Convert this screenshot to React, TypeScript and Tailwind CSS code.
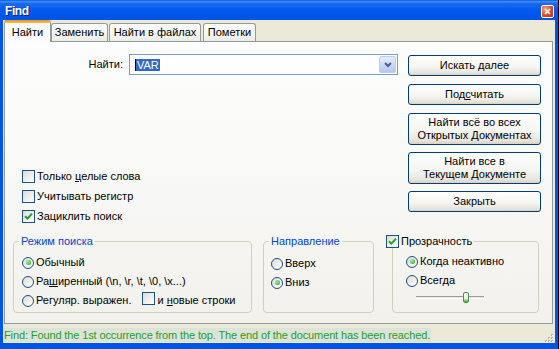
import React from "react";

function CheckBox({ checked = false }: { checked?: boolean }) {
  return (
    <span className="inline-flex w-[13px] h-[13px] shrink-0 items-center justify-center border border-[#1c5180] bg-[linear-gradient(135deg,#dcdcd7,#ffffff)]">
      {checked && (
        <svg width="9" height="9" viewBox="0 0 9 9">
          <path d="M1 4.2 L3.4 6.6 L8 1.6" stroke="#21a121" strokeWidth="2" fill="none" />
        </svg>
      )}
    </span>
  );
}

function Radio({ on = false }: { on?: boolean }) {
  return (
    <span className="inline-flex w-[12px] h-[12px] shrink-0 items-center justify-center rounded-full border border-[#1c5180] bg-[linear-gradient(135deg,#dcdcd7,#ffffff)]">
      {on && (
        <span className="w-[5px] h-[5px] rounded-full bg-[radial-gradient(circle_at_35%_35%,#a6f0a0,#21a121)]" />
      )}
    </span>
  );
}

function Btn({ children, tall = false }: { children: React.ReactNode; tall?: boolean }) {
  return (
    <div
      className={
        (tall ? "h-[32px] " : "h-[21px] ") +
        "w-[133px] rounded-[3px] border border-[#003c74] bg-[linear-gradient(#ffffff,#f4f4f0_60%,#e6e3da_90%,#d6d0c5)] flex flex-col items-center justify-center text-center leading-[13px] whitespace-nowrap"
      }
    >
      {children}
    </div>
  );
}

export default function App() {
  return (
    <div className="w-[559px] h-[349px] bg-black flex overflow-hidden [font-family:'Liberation_Sans',Arial,sans-serif] text-[11px] text-black">
      <div className="w-[558px] h-[349px] flex flex-col bg-[#0055e5]">
        {/* Title bar */}
        <div className="h-[20px] shrink-0 flex items-center bg-[linear-gradient(#0a55dc_0%,#3d8cf6_8%,#1a68f0_18%,#0058ee_55%,#0053e4_100%)]">
          <span className="ml-[5px] mt-[1px] text-white font-bold text-[12px] tracking-[-0.4px] [text-shadow:1px_1px_0_#0a1e7a]">
            Find
          </span>
          <div className="ml-auto mr-[4px] mt-[2px] w-[13px] h-[13px] rounded-[2px] border border-white bg-[radial-gradient(circle_at_30%_30%,#f0a58a,#d8451d_60%,#b8300c)] flex items-center justify-center">
            <svg width="7" height="7" viewBox="0 0 7 7">
              <path d="M1 1 L6 6 M6 1 L1 6" stroke="white" strokeWidth="1.6" />
            </svg>
          </div>
        </div>

        {/* Body */}
        <div className="flex-1 mx-[3px] bg-[#ece9d8] flex flex-col">
          {/* Tabs */}
          <div className="h-[21px] shrink-0 flex items-end pl-[1px]">
            <div className="relative z-10 -mb-px w-[47px] h-[22px] rounded-t-[3px] border-x border-[#919b9c] bg-[#fcfcfe] flex flex-col">
              <div className="h-[3px] -mx-px rounded-t-[3px] bg-[linear-gradient(#e68b2c,#ffc73c)]" />
              <div className="flex-1 flex items-center justify-center pb-[1px]">Найти</div>
            </div>
            <div className="w-[57px] h-[18px] rounded-t-[3px] border border-b-0 border-[#919b9c] bg-[linear-gradient(#ffffff,#f3f3ef_70%,#ecebe6)] flex items-center justify-center">
              Заменить
            </div>
            <div className="ml-[1px] w-[92px] h-[18px] rounded-t-[3px] border border-b-0 border-[#919b9c] bg-[linear-gradient(#ffffff,#f3f3ef_70%,#ecebe6)] flex items-center justify-center">
              Найти в файлах
            </div>
            <div className="ml-[2px] w-[53px] h-[18px] rounded-t-[3px] border border-b-0 border-[#919b9c] bg-[linear-gradient(#ffffff,#f3f3ef_70%,#ecebe6)] flex items-center justify-center">
              Пометки
            </div>
          </div>

          {/* Panel */}
          <div className="ml-[1px] w-[549px] h-[283px] shrink-0 border border-[#919b9c] bg-[linear-gradient(#fdfdfd,#f8f8f6_50%,#f2f1ec)] flex flex-col">
            {/* Top section */}
            <div className="h-[183px] shrink-0 pt-[12px] flex">
              <div className="w-[393px] flex flex-col">
                <div className="h-[21px] flex items-center">
                  <span className="w-[118px] text-right">Найти:</span>
                  <div className="ml-[6px] w-[269px] h-[21px] border border-[#7f9db9] bg-white flex items-center">
                    <span className="ml-[5px] h-[12px] leading-[12px] px-[1px] bg-[#316ac5] text-white border-l border-black">
                      VAR
                    </span>
                    <div className="ml-auto mr-[1px] w-[17px] h-[17px] rounded-[2px] border border-[#b9cdf5] bg-[linear-gradient(#e6eefd,#c6d7fa_60%,#b3c8f4)] flex items-center justify-center">
                      <svg width="8" height="6" viewBox="0 0 8 6">
                        <path d="M1 1 L4 4 L7 1" stroke="#4d6185" strokeWidth="2" fill="none" />
                      </svg>
                    </div>
                  </div>
                </div>
                <div className="mt-[91px] pl-[17px] flex flex-col">
                  <div className="h-[20px] flex items-center gap-[2px]">
                    <CheckBox />
                    <span>
                      Только <u>ц</u>елые слова
                    </span>
                  </div>
                  <div className="h-[20px] flex items-center gap-[2px]">
                    <CheckBox />
                    <span>Учитывать регистр</span>
                  </div>
                  <div className="h-[20px] flex items-center gap-[2px]">
                    <CheckBox checked />
                    <span>Зациклить поиск</span>
                  </div>
                </div>
              </div>
              <div className="ml-[10px] mt-[1px] flex flex-col">
                <Btn>Искать далее</Btn>
                <div className="mt-[8px]">
                  <Btn>
                    <span>
                      Под<u>с</u>читать
                    </span>
                  </Btn>
                </div>
                <div className="mt-[8px]">
                  <Btn tall>
                    <span>Найти всё во всех</span>
                    <span>Открытых Документах</span>
                  </Btn>
                </div>
                <div className="mt-[7px]">
                  <Btn tall>
                    <span>Найти все в</span>
                    <span>Текущем Документе</span>
                  </Btn>
                </div>
                <div className="mt-[7px]">
                  <Btn>Закрыть</Btn>
                </div>
              </div>
            </div>

            {/* Groups */}
            <div className="mt-[10px] flex items-start">
              <fieldset className="ml-[8px] w-[239px] h-[78px] border border-[#d0d0bf] rounded-[4px]">
                <legend className="ml-[5px] px-[2px] leading-[13px] text-[#0046d5]">Режим поиска</legend>
                <div className="pl-[8px] pt-[5px] flex flex-col">
                  <div className="h-[19px] flex items-center gap-[2px]">
                    <Radio on />
                    <span>Обычный</span>
                  </div>
                  <div className="h-[19px] flex items-center gap-[2px]">
                    <Radio />
                    <span>
                      Ра<u>ш</u>иренный (\n, \r, \t, \0, \x...)
                    </span>
                  </div>
                  <div className="h-[19px] flex items-center gap-[2px]">
                    <Radio />
                    <span>Регуляр. выражен.</span>
                    <span className="ml-[9px]">
                      <CheckBox />
                    </span>
                    <span>
                      и <u>н</u>овые строки
                    </span>
                  </div>
                </div>
              </fieldset>

              <fieldset className="ml-[11px] w-[111px] h-[78px] border border-[#d0d0bf] rounded-[4px]">
                <legend className="ml-[5px] px-[2px] leading-[13px] text-[#0046d5]">Направление</legend>
                <div className="pl-[7px] pt-[6px] flex flex-col">
                  <div className="h-[19px] flex items-center gap-[2px]">
                    <Radio />
                    <span>Вверх</span>
                  </div>
                  <div className="h-[19px] flex items-center gap-[2px]">
                    <Radio on />
                    <span>Вниз</span>
                  </div>
                </div>
              </fieldset>

              <fieldset className="ml-[18px] w-[147px] h-[78px] border border-[#d0d0bf] rounded-[4px]">
                <legend className="-ml-[7px] pr-[2px] h-[13px] leading-[13px] flex items-center gap-[2px]">
                  <CheckBox checked />
                  <span>Прозрачность</span>
                </legend>
                <div className="pl-[13px] pt-[4px] flex flex-col">
                  <div className="h-[19px] flex items-center gap-[2px]">
                    <Radio on />
                    <span>Когда неактивно</span>
                  </div>
                  <div className="h-[19px] flex items-center gap-[2px]">
                    <Radio />
                    <span>Всегда</span>
                  </div>
                  <div className="h-[14px] pl-[10px] flex items-center">
                    <div className="relative w-[68px] h-[3px] border-t border-[#9d9c99] border-b border-b-white bg-[#e8e7e2]">
                      <div className="absolute left-[47px] -top-[5px] w-[6px] h-[11px] rounded-[2px] border border-[#4f8f4f] bg-[linear-gradient(#ffffff,#e8f4e4_60%,#3aab3a)]" />
                    </div>
                  </div>
                </div>
              </fieldset>
            </div>
          </div>

          {/* Status bar */}
          <div className="h-[19px] shrink-0 flex items-start pt-[4px] relative">
            <div className="h-[14px] leading-[14px] pl-[1px] pr-[1px] bg-[#dde3d9] text-[#1f9f1f] whitespace-nowrap tracking-[-0.12px]">
              Find: Found the 1st occurrence from the top. The end of the document has been reached.
            </div>
            <svg className="absolute right-[1px] bottom-0" width="11" height="11" viewBox="0 0 11 11">
              <g fill="#b9b6a9">
                <rect x="8" y="2" width="2" height="2" />
                <rect x="5" y="5" width="2" height="2" />
                <rect x="8" y="5" width="2" height="2" />
                <rect x="2" y="8" width="2" height="2" />
                <rect x="5" y="8" width="2" height="2" />
                <rect x="8" y="8" width="2" height="2" />
              </g>
              <g fill="#ffffff">
                <rect x="9" y="3" width="1" height="1" />
                <rect x="6" y="6" width="1" height="1" />
                <rect x="9" y="6" width="1" height="1" />
                <rect x="3" y="9" width="1" height="1" />
                <rect x="6" y="9" width="1" height="1" />
                <rect x="9" y="9" width="1" height="1" />
              </g>
            </svg>
          </div>
        </div>
        <div className="h-[6px] shrink-0" />
      </div>
    </div>
  );
}
